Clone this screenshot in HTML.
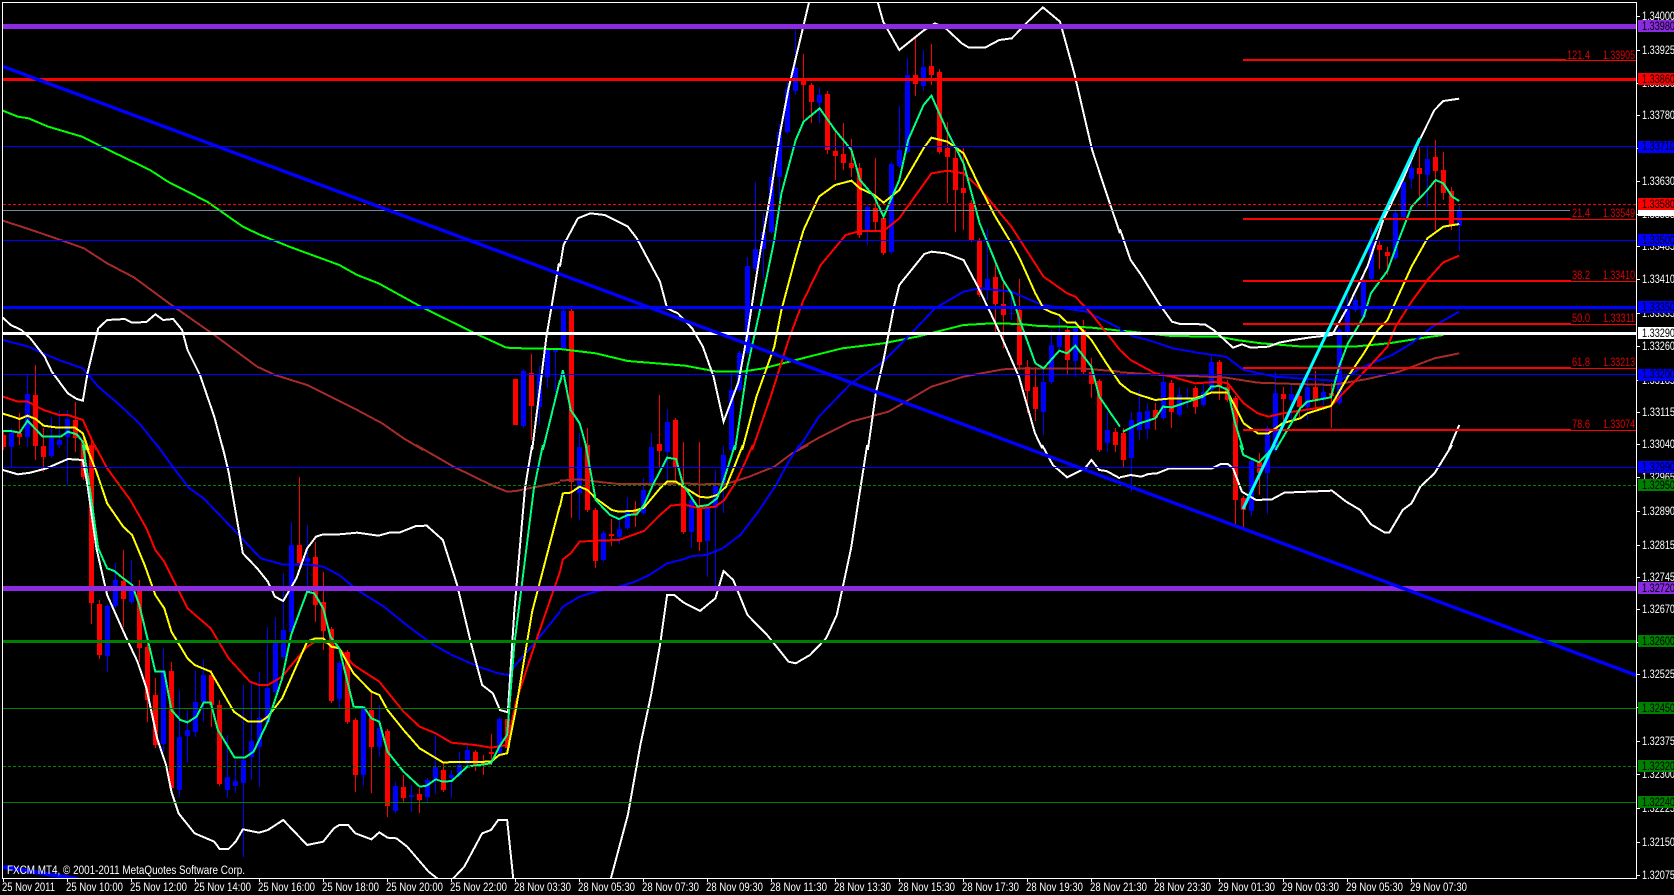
<!DOCTYPE html>
<html><head><meta charset="utf-8"><title>FXCM MT4</title>
<style>html,body{margin:0;padding:0;background:#000;width:1674px;height:895px;overflow:hidden}svg{display:block}
text{font-family:"Liberation Sans",sans-serif;font-size:11.5px}
polyline{fill:none;vector-effect:non-scaling-stroke;stroke-linejoin:miter}</style></head><body>
<svg width="1674" height="895" viewBox="0 0 1674 895" xmlns="http://www.w3.org/2000/svg">
<defs><clipPath id="c"><rect x="3" y="3" width="1633" height="875"/></clipPath></defs>
<rect width="1674" height="895" fill="#000"/>
<g clip-path="url(#c)">
<g transform="translate(.5,0)" shape-rendering="crispEdges" fill="none">
<path stroke="#f00" stroke-width="1" d="M3 430V450M19 413V445M35 365V460M43 428V472M75 402V452M83 437V480M91 440V624M99 600V659M123 550V627M139 580V662M147 640V722M155 678V748M171 662V790M211 670V727M219 700V786M299 477V570M315 542V622M323 572V650M331 627V703M347 650V724M355 718V792M371 692V793M387 729V817M403 775V803M419 788V813M443 763V792M475 750V771M483 755V775M491 734V765M507 719V750M515 379V425M531 354V440M571 309V518M587 428V512M595 508V568M611 519V546M635 501V527M659 395V467M675 418V480M683 442V534M699 442V551M803 54V120M811 83V123M827 91V154M835 132V180M843 123V170M851 139V177M859 163V238M875 158V230M883 216V255M915 36V96M931 44V85M939 69V154M947 122V203M955 148V232M963 148V230M971 200V242M979 238V297M995 264V333M1003 281V348M1019 279V370M1027 360V413M1035 367V421M1067 328V375M1083 320V374M1091 358V398M1099 379V452M1115 428V452M1123 428V468M1155 403V430M1171 380V428M1195 386V414M1219 360V400M1227 380V402M1235 396V524M1243 496V527M1259 453V495M1283 387V427M1299 383V417M1315 371V408M1331 383V428M1379 240V269M1387 247V275M1419 147V200M1435 140V230M1443 152V200M1451 187V230"/>
<path stroke="#00f" stroke-width="1" d="M11 428V467M27 375V447M51 417V458M59 410V448M67 410V485M107 604V672M115 563V608M131 560V604M163 648V752M179 690V797M187 710V763M195 670V737M203 659V722M227 735V798M235 760V793M243 685V857M251 683V780M259 672V787M267 627V724M275 617V694M283 573V659M291 522V634M307 525V592M339 661V708M363 706V786M379 705V757M395 782V813M411 785V812M427 778V802M435 735V794M451 770V798M459 752V777M467 745V766M499 717V755M523 369V428M539 366V425M547 348V388M555 350V392M563 309V350M579 433V520M603 531V562M619 519V544M627 497V530M643 478V515M651 433V485M667 409V482M691 498V548M707 506V577M715 470V590M723 446V513M731 373V452M739 351V392M747 257V355M755 182V271M763 213V278M771 162V234M779 124V200M787 82V134M795 30V95M819 87V123M867 205V245M891 162V254M899 106V168M907 58V154M923 50V91M987 229V300M1011 293V320M1043 368V435M1051 330V384M1059 317V349M1075 320V377M1107 412V452M1131 412V492M1139 390V440M1147 403V439M1163 372V420M1179 387V417M1187 388V408M1203 383V407M1211 355V392M1251 459V516M1267 426V514M1275 372V452M1291 383V425M1307 373V420M1323 382V405M1339 328V405M1347 295V338M1355 295V312M1363 277V319M1371 228V281M1395 211V260M1403 177V219M1411 160V189M1427 147V207M1459 206V251"/>
<path stroke="#f00" stroke-width="5" d="M3 435V447M19 433V437M35 395V446M43 446V457M75 420V438M83 440V477M91 445V603M99 604V655M123 581V599M139 590V648M147 647V700M155 695V745M171 671V788M211 675V705M219 705V784M299 545V563M315 557V605M323 602V631M331 629V701M347 652V722M355 720V775M371 710V747M387 731V806M403 787V798M419 794V800M443 770V790M475 752V765M483 763V765M491 752V754M507 719V748M515 379V425M531 373V406M571 311V482M587 445V510M595 510V561M611 534V536M635 511V514M659 444V451M675 420V467M683 486V532M699 508V542M803 78V85M811 85V102M827 94V150M835 151V156M843 154V163M851 163V168M859 168V235M875 208V222M883 218V253M915 75V84M931 66V75M939 72V152M947 148V157M955 158V190M963 188V193M971 203V240M979 240V295M995 277V304M1003 304V315M1019 310V365M1027 367V391M1035 387V409M1067 330V360M1083 330V372M1091 372V384M1099 381V450M1115 432V445M1123 433V460M1155 410V418M1171 383V412M1195 388V407M1219 362V387M1227 387V400M1235 398V500M1243 498V510M1259 462V473M1283 394V399M1299 396V407M1315 387V399M1331 393V396M1379 245V250M1387 252V256M1419 168V174M1435 157V171M1443 170V193M1451 191V226"/>
<path stroke="#00f" stroke-width="5" d="M11 433V447M27 394V437M51 438V456M59 440V445M67 419V437M107 606V656M115 580V606M131 590V602M163 671V744M179 737V790M187 730V736M195 702V732M203 675V702M227 777V790M235 781V786M243 760V783M251 741V757M259 718V747M267 688V722M275 643V692M283 630V657M291 545V632M307 558V562M339 663V699M363 708V775M379 728V747M395 786V811M411 795V797M427 780V797M435 767V780M451 775V778M459 765V775M467 750V764M499 719V753M523 371V426M539 375V407M547 350V377M555 350V352M563 311V348M579 447V493M603 533V560M619 529V537M627 510V528M643 490V513M651 447V483M667 422V452M691 500V532M707 508V541M715 486V508M723 455V486M731 390V450M739 353V390M747 266V353M755 249V269M763 232V249M771 177V232M779 132V177M787 89V132M795 68V91M819 95V103M867 207V230M891 164V252M899 150V166M907 75V152M923 67V86M987 279V290M1011 313V314M1043 382V412M1051 345V382M1059 332V347M1075 328V361M1107 430V443M1131 420V458M1139 412V430M1147 411V429M1163 382V418M1179 395V415M1187 397V399M1203 392V405M1211 362V390M1251 461V511M1267 428V473M1275 393V450M1291 394V400M1307 387V407M1323 392V398M1339 330V403M1347 310V332M1355 300V310M1363 280V317M1371 242V279M1395 213V258M1403 182V217M1411 168V179M1427 159V175M1459 210V226"/>
</g>
<!-- Indicators: coordinates expressed in each region -->
<g stroke-width="2" shape-rendering="crispEdges">
<g transform="scale(.35714,.33333)">
<polyline stroke="#a52a2a" points="8,662 80,687 170,720 235,745 300,790 375,832 480,915 600,1005 720,1100 770,1125 860,1155 1000,1230 1070,1270 1130,1315 1185,1350"/>
<polyline stroke="#0f0" points="8,332 50,350 80,355 135,380 230,410 285,440 420,510 470,545 580,605 680,680 725,703 810,740 950,795 1000,825 1060,850 1170,915 1320,995 1418,1043 1465,1045 1568,1047"/>
<polyline stroke="#00f" points="8,1020 80,1040 120,1060 170,1082 232,1105 275,1160 330,1210 390,1270 450,1350"/>
<polyline stroke="#fff" points="8,953 30,975 60,990 85,1015 125,1070 145,1115 190,1180 215,1197 232,1202 245,1120 275,985 300,960 350,957 370,968 410,966 435,943 457,960 485,957 510,990 525,1050 560,1125 600,1250 625,1350"/>
<polyline stroke="#fff" points="1490,1350 1530,1010 1565,790"/>
<polyline stroke="#f00" points="8,1190 50,1205 77,1205 122,1230 165,1245 190,1245 232,1260 270,1350"/>
<polyline stroke="#ff0" points="8,1241 30,1248 55,1257 77,1247 100,1257 122,1277 155,1282 210,1283 232,1300 248,1350"/>
<polyline stroke="#00ff7f" points="8,1293 30,1293 55,1298 77,1262 120,1310 170,1310 190,1295 215,1303 232,1325 240,1350"/>
<polyline stroke="#00ff7f" points="1520,1350 1568,1140"/>
</g>
<g transform="translate(0,445) scale(.35714,.33333)">
<polyline stroke="#a52a2a" points="1165,0 1270,65 1385,125 1420,140 1445,138 1490,128 1568,112"/>
<polyline stroke="#00f" points="440,0 480,60 530,130 570,160 660,260 730,340 790,358 860,358 905,365 950,390 1000,435 1075,485 1150,550 1215,600 1265,630 1340,665 1395,685 1425,690 1435,670 1500,590 1568,500"/>
<polyline stroke="#fff" points="622,0 640,80 680,325 720,370 750,410 770,455 793,468 830,400 860,310 885,275 905,268 950,268 1000,263 1060,272 1090,263 1120,262 1165,243 1195,242 1240,285 1280,420 1320,600 1350,720 1380,745 1400,795 1422,802 1440,500 1470,130 1490,0"/>
<polyline stroke="#fff" points="8,75 50,88 85,83 130,70 190,42 232,45 245,120 270,310 300,450 350,570 385,650 410,730 440,880 465,960 480,1040 500,1105 545,1165 600,1190 615,1212 640,1212 660,1190 680,1153 725,1163 750,1155 793,1125 860,1200 905,1190 935,1150 950,1140 975,1140 995,1165 1040,1183 1062,1162 1085,1178 1110,1180 1140,1205 1200,1280 1230,1305 1265,1305 1300,1265 1350,1165 1375,1155 1395,1125 1420,1125 1438,1310"/>
<polyline stroke="#f00" points="265,0 300,70 365,165 410,250 435,315 460,350 525,490 590,550 640,640 700,710 725,720 750,720 790,695 820,655 860,605 883,590 905,590 950,610 990,660 1062,710 1130,800 1175,845 1220,865 1264,893 1330,900 1375,908 1420,900 1445,770 1500,590 1568,380"/>
<polyline stroke="#ff0" points="240,0 270,80 300,175 345,245 370,270 405,360 435,450 460,490 480,560 525,640 545,660 590,680 655,800 695,830 730,830 750,815 790,760 860,590 883,580 905,580 928,605 950,610 990,685 1040,740 1062,750 1085,795 1130,855 1175,910 1240,952 1375,950 1398,930 1420,925 1445,790 1490,500 1568,180"/>
<polyline stroke="#00ff7f" points="232,0 250,120 275,310 300,370 320,378 345,400 370,420 390,480 415,590 435,680 460,680 480,795 505,825 525,832 550,815 570,773 590,773 610,855 657,938 685,938 710,920 750,830 790,700 815,570 860,440 880,445 905,490 925,575 950,610 990,785 1020,787 1040,820 1062,830 1085,920 1130,980 1175,1025 1195,1022 1220,1003 1240,1010 1265,1008 1308,965 1375,955 1398,905 1420,870 1440,600 1495,130 1520,0"/>
</g>
<g transform="translate(560,0) scale(.35714,.33333)">
<polyline stroke="#a52a2a" points="665,1350 730,1310 815,1265 920,1235 1040,1160 1130,1130 1240,1108 1310,1105 1460,1105 1568,1115"/>
<polyline stroke="#0f0" points="0,1047 100,1060 190,1083 350,1097 440,1115 510,1115 570,1105 660,1080 790,1045 905,1030 1000,1010 1130,975 1210,970 1290,972 1340,978 1480,982 1568,992"/>
<polyline stroke="#00f" points="665,1350 725,1250 815,1150 905,1085 975,1010 1050,925 1130,875 1175,865 1264,875 1350,915 1475,935 1568,985"/>
<polyline stroke="#fff" points="0,800 10,735 50,655 85,640 125,645 190,680 215,715 280,845 300,925 330,940 370,985 400,1040 430,1130 458,1265 500,1145 525,1000 560,760 590,580 616,400 640,265 680,85 697,8"/>
<polyline stroke="#fff" points="890,8 905,65 950,150 1020,90 1050,70 1080,85 1125,130 1145,143 1190,143 1230,120 1265,115 1310,65 1352,22 1400,65 1440,220 1490,450 1530,580 1568,700"/>
<polyline stroke="#fff" points="862,1350 885,1175 905,1085 935,920 950,855 1020,762 1040,755 1080,760 1130,780 1170,860 1215,960 1240,1020 1285,1130 1330,1300 1350,1345"/>
<polyline stroke="#f00" points="538,1350 590,1190 640,1020 680,905 730,795 800,705 840,693 906,693 950,655 1040,520 1085,512 1130,520 1175,565 1264,680 1354,830 1420,880 1443,890 1487,940 1568,1050"/>
<polyline stroke="#ff0" points="510,1350 550,1190 600,1040 620,930 660,770 682,690 725,590 770,555 816,542 840,565 880,585 906,608 950,570 1018,445 1040,413 1085,425 1130,460 1175,560 1219,650 1264,730 1287,775 1331,880 1354,925 1376,937 1398,945 1420,968 1443,968 1488,1020 1530,1090 1568,1150"/>
<polyline stroke="#00ff7f" points="0,1150 8,1110 30,1230 55,1270 75,1345"/>
<polyline stroke="#00ff7f" points="490,1350 525,1100 560,930 600,720 620,580 660,420 682,365 727,325 770,390 816,450 840,540 880,590 906,650 950,540 975,420 1018,315 1040,287 1085,395 1130,490 1175,670 1240,840 1264,880 1287,960 1331,1090 1354,1105 1398,1052 1420,1060 1443,1037 1488,1100 1510,1190 1568,1280"/>
</g>
<g transform="translate(560,445) scale(.35714,.33333)">
<polyline stroke="#a52a2a" points="0,107 55,103 120,112 165,117 300,117 345,115 390,118 465,117 530,95 600,65 650,25 695,0"/>
<polyline stroke="#00f" points="0,497 8,485 55,455 100,440 165,425 210,410 250,390 300,355 345,343 370,333 410,330 455,310 505,270 555,200 605,120 640,50 670,0"/>
<polyline stroke="#fff" points="140,1310 190,1110 225,900 255,750 280,600 300,450 320,450 345,472 392,498 435,460 458,378 485,405 525,510 580,570 640,650 660,655 700,630 745,580 775,510 815,310 860,0"/>
<polyline stroke="#fff" points="1350,0 1380,60 1420,97 1470,70 1488,45 1510,75 1530,78 1568,100"/>
<polyline stroke="#f00" points="0,380 8,343 30,325 55,290 100,287 165,285 190,275 235,258 280,210 310,182 345,178 390,190 435,185 460,165 490,115 515,60 540,0"/>
<polyline stroke="#ff0" points="0,185 8,145 30,143 55,125 77,135 100,160 145,195 165,200 210,197 235,188 280,130 300,110 325,110 345,125 390,155 415,158 440,150 465,125 490,60 512,0"/>
<polyline stroke="#00ff7f" points="72,0 100,165 140,210 165,222 190,210 215,208 235,180 260,120 300,38 325,42 345,120 385,185 415,180 440,160 460,100 490,0"/>
</g>
<g transform="translate(1120,0) scale(.35336,.33333)">
<polyline stroke="#a52a2a" points="0,1117 120,1125 210,1128 300,1133 390,1148 500,1152 600,1155 700,1137 790,1115 890,1075 960,1060"/>
<polyline stroke="#0f0" points="0,992 40,996 145,1008 280,1010 330,1020 400,1030 520,1040 660,1040 760,1030 880,1010 915,1005"/>
<polyline stroke="#00f" points="0,990 40,1010 80,1020 150,1045 230,1060 300,1070 350,1110 440,1130 530,1137 620,1143 690,1100 770,1065 825,1030 885,980 960,935"/>
<polyline stroke="#fff" points="0,688 30,780 60,825 110,910 147,965 170,972 240,973 265,990 320,1043 345,1033 370,1043 420,1040 450,1028 490,1020 540,1012 600,1005 640,930 700,800 745,660 800,540 850,415 890,330 915,303 960,296"/>
<polyline stroke="#fff" points="930,1350 960,1275"/>
<polyline stroke="#f00" points="0,1050 30,1080 100,1120 146,1130 213,1150 280,1145 305,1150 350,1210 390,1240 420,1250 460,1240 597,1218 645,1165 705,1100 757,1040 780,980 825,905 870,840 915,787 960,767"/>
<polyline stroke="#ff0" points="0,1150 30,1175 55,1185 100,1200 146,1195 213,1195 258,1178 305,1178 326,1220 350,1270 390,1300 420,1300 460,1270 510,1255 530,1240 597,1218 645,1130 690,1060 730,990 757,960 780,905 825,800 870,715 915,680 960,672"/>
<polyline stroke="#00ff7f" points="8,1295 55,1270 100,1255 122,1220 146,1222 235,1190 258,1160 281,1158 305,1170 326,1270 349,1350"/>
<polyline stroke="#00ff7f" points="440,1350 510,1225 530,1205 597,1192 620,1100 645,1030 690,950 710,880 757,812 785,730 825,620 870,570 893,540 915,550 940,590 960,603"/>
</g>
<g transform="translate(1120,445) scale(.35336,.33333)">
<polyline stroke="#fff" points="0,97 30,90 60,95 80,87 105,85 140,70 260,70 285,57 305,57 320,70 345,140 385,165 430,163 465,143 600,137 640,170 680,195 710,238 750,263 762,263 800,195 825,175 850,125 890,85 925,25 940,0"/>
<polyline stroke="#00ff7f" points="340,0 349,30 394,52 440,0"/>
</g>
</g>
<!-- horizontal levels -->
<g shape-rendering="crispEdges">
<rect x="3" y="24" width="1634" height="5" fill="#8a2be2"/>
<rect x="3" y="78" width="1634" height="3" fill="#f00"/>
<rect x="3" y="146" width="1634" height="1" fill="#00f"/>
<line x1="3" x2="1637" y1="204.5" y2="204.5" stroke="#f00" stroke-dasharray="3 2"/>
<rect x="3" y="210" width="1567" height="1" fill="#778899"/>
<rect x="3" y="240" width="1634" height="1" fill="#00f"/>
<rect x="3" y="306" width="1634" height="3" fill="#00f"/>
<rect x="3" y="332" width="1634" height="3" fill="#fff"/>
<rect x="3" y="374" width="1634" height="1" fill="#00f"/>
<rect x="3" y="467" width="1634" height="1" fill="#00f"/>
<line x1="3" x2="1637" y1="485.5" y2="485.5" stroke="#008000" stroke-dasharray="3 2"/>
<rect x="3" y="586" width="1634" height="5" fill="#8a2be2"/>
<rect x="3" y="640" width="1634" height="3" fill="#008000"/>
<rect x="3" y="708" width="1634" height="1" fill="#008000"/>
<line x1="3" x2="1637" y1="766.5" y2="766.5" stroke="#008000" stroke-dasharray="3 2"/>
<rect x="3" y="802" width="1634" height="1" fill="#008000"/>
<!-- fibonacci -->
<g fill="#f00">
<rect x="1243" y="59" width="323" height="2"/><rect x="1566" y="60" width="70" height="1"/>
<rect x="1243" y="218" width="328" height="2"/><rect x="1571" y="219" width="65" height="1"/>
<rect x="1243" y="280" width="328" height="2"/><rect x="1571" y="281" width="65" height="1"/>
<rect x="1243" y="323" width="328" height="2"/><rect x="1571" y="324" width="65" height="1"/>
<rect x="1243" y="367" width="328" height="2"/><rect x="1571" y="368" width="65" height="1"/>
<rect x="1243" y="429" width="328" height="2"/><rect x="1571" y="430" width="65" height="1"/>
</g>
</g>
<!-- trend lines -->
<line x1="3" y1="66.5" x2="1637" y2="675.5" stroke="#00f" stroke-width="3.4"/>
<line x1="3" y1="867" x2="78" y2="879" stroke="#00f" stroke-width="4"/>
<line x1="1243" y1="509" x2="1420" y2="138" stroke="#00ffff" stroke-width="3"/>
</g>
<!-- fib labels -->
<g fill="#e00000">
<text x="1567" y="59" textLength="23" lengthAdjust="spacingAndGlyphs">121.4</text><text x="1603" y="59" textLength="32" lengthAdjust="spacingAndGlyphs">1.33905</text>
<text x="1572" y="217" textLength="18" lengthAdjust="spacingAndGlyphs">21.4</text><text x="1603" y="217" textLength="32" lengthAdjust="spacingAndGlyphs">1.33549</text>
<text x="1572" y="279" textLength="18" lengthAdjust="spacingAndGlyphs">38.2</text><text x="1603" y="279" textLength="32" lengthAdjust="spacingAndGlyphs">1.33410</text>
<text x="1572" y="322" textLength="18" lengthAdjust="spacingAndGlyphs">50.0</text><text x="1603" y="322" textLength="32" lengthAdjust="spacingAndGlyphs">1.33311</text>
<text x="1572" y="366" textLength="18" lengthAdjust="spacingAndGlyphs">61.8</text><text x="1603" y="366" textLength="32" lengthAdjust="spacingAndGlyphs">1.33213</text>
<text x="1572" y="428" textLength="18" lengthAdjust="spacingAndGlyphs">78.6</text><text x="1603" y="428" textLength="32" lengthAdjust="spacingAndGlyphs">1.33074</text>
</g>
<!-- frame -->
<g shape-rendering="crispEdges" fill="#fff">
<rect x="2" y="2" width="1635" height="1"/>
<rect x="2" y="2" width="1" height="877"/>
<rect x="1636" y="2" width="1" height="877"/>
<rect x="2" y="878" width="1635" height="1"/>
<path d="M3 879h1v3h-1zM67 879h1v3h-1zM131 879h1v3h-1zM195 879h1v3h-1zM259 879h1v3h-1zM323 879h1v3h-1zM387 879h1v3h-1zM451 879h1v3h-1zM515 879h1v3h-1zM579 879h1v3h-1zM643 879h1v3h-1zM707 879h1v3h-1zM771 879h1v3h-1zM835 879h1v3h-1zM899 879h1v3h-1zM963 879h1v3h-1zM1027 879h1v3h-1zM1091 879h1v3h-1zM1155 879h1v3h-1zM1219 879h1v3h-1zM1283 879h1v3h-1zM1347 879h1v3h-1zM1411 879h1v3h-1z"/>
<path d="M1637 16h3v1h-3zM1637 50h3v1h-3zM1637 83h3v1h-3zM1637 115h3v1h-3zM1637 148h3v1h-3zM1637 181h3v1h-3zM1637 214h3v1h-3zM1637 246h3v1h-3zM1637 279h3v1h-3zM1637 313h3v1h-3zM1637 346h3v1h-3zM1637 380h3v1h-3zM1637 412h3v1h-3zM1637 444h3v1h-3zM1637 477h3v1h-3zM1637 511h3v1h-3zM1637 545h3v1h-3zM1637 577h3v1h-3zM1637 609h3v1h-3zM1637 642h3v1h-3zM1637 674h3v1h-3zM1637 707h3v1h-3zM1637 741h3v1h-3zM1637 774h3v1h-3zM1637 808h3v1h-3zM1637 842h3v1h-3zM1637 875h3v1h-3z"/>
</g>
<!-- price scale -->
<g fill="#fff">
<text x="1642" y="20" textLength="33" lengthAdjust="spacingAndGlyphs">1.34000</text>
<text x="1642" y="54" textLength="33" lengthAdjust="spacingAndGlyphs">1.33925</text>
<text x="1642" y="87" textLength="33" lengthAdjust="spacingAndGlyphs">1.33850</text>
<text x="1642" y="119" textLength="33" lengthAdjust="spacingAndGlyphs">1.33780</text>
<text x="1642" y="152" textLength="33" lengthAdjust="spacingAndGlyphs">1.33705</text>
<text x="1642" y="185" textLength="33" lengthAdjust="spacingAndGlyphs">1.33630</text>
<text x="1642" y="218" textLength="33" lengthAdjust="spacingAndGlyphs">1.33555</text>
<text x="1642" y="250" textLength="33" lengthAdjust="spacingAndGlyphs">1.33485</text>
<text x="1642" y="283" textLength="33" lengthAdjust="spacingAndGlyphs">1.33410</text>
<text x="1642" y="317" textLength="33" lengthAdjust="spacingAndGlyphs">1.33335</text>
<text x="1642" y="350" textLength="33" lengthAdjust="spacingAndGlyphs">1.33260</text>
<text x="1642" y="384" textLength="33" lengthAdjust="spacingAndGlyphs">1.33185</text>
<text x="1642" y="416" textLength="33" lengthAdjust="spacingAndGlyphs">1.33115</text>
<text x="1642" y="448" textLength="33" lengthAdjust="spacingAndGlyphs">1.33040</text>
<text x="1642" y="481" textLength="33" lengthAdjust="spacingAndGlyphs">1.32965</text>
<text x="1642" y="515" textLength="33" lengthAdjust="spacingAndGlyphs">1.32890</text>
<text x="1642" y="549" textLength="33" lengthAdjust="spacingAndGlyphs">1.32815</text>
<text x="1642" y="581" textLength="33" lengthAdjust="spacingAndGlyphs">1.32745</text>
<text x="1642" y="613" textLength="33" lengthAdjust="spacingAndGlyphs">1.32670</text>
<text x="1642" y="678" textLength="33" lengthAdjust="spacingAndGlyphs">1.32525</text>
<text x="1642" y="745" textLength="33" lengthAdjust="spacingAndGlyphs">1.32375</text>
<text x="1642" y="778" textLength="33" lengthAdjust="spacingAndGlyphs">1.32300</text>
<text x="1642" y="812" textLength="33" lengthAdjust="spacingAndGlyphs">1.32225</text>
<text x="1642" y="846" textLength="33" lengthAdjust="spacingAndGlyphs">1.32150</text>
<text x="1642" y="879" textLength="33" lengthAdjust="spacingAndGlyphs">1.32075</text>
</g>
<!-- price tags -->
<g shape-rendering="crispEdges">
<rect x="1638" y="20" width="36" height="12" fill="#8a2be2"/>
<rect x="1638" y="73" width="36" height="12" fill="#f00"/>
<rect x="1638" y="141" width="36" height="12" fill="#00f"/>
<rect x="1638" y="205" width="36" height="11" fill="#fff"/>
<rect x="1638" y="198" width="36" height="12" fill="#f00"/>
<rect x="1638" y="234" width="36" height="12" fill="#00f"/>
<rect x="1638" y="301" width="36" height="12" fill="#00f"/>
<rect x="1638" y="327" width="36" height="12" fill="#fff"/>
<rect x="1638" y="369" width="36" height="12" fill="#00f"/>
<rect x="1638" y="461" width="36" height="12" fill="#00f"/>
<rect x="1638" y="479" width="36" height="12" fill="#008000"/>
<rect x="1638" y="582" width="36" height="12" fill="#8a2be2"/>
<rect x="1638" y="635" width="36" height="12" fill="#008000"/>
<rect x="1638" y="702" width="36" height="12" fill="#008000"/>
<rect x="1638" y="760" width="36" height="12" fill="#008000"/>
<rect x="1638" y="796" width="36" height="12" fill="#008000"/>
</g>
<g fill="#000">
<text x="1642" y="30" textLength="33" lengthAdjust="spacingAndGlyphs">1.33980</text>
<text x="1642" y="83" textLength="33" lengthAdjust="spacingAndGlyphs">1.33860</text>
<text x="1642" y="150" textLength="33" lengthAdjust="spacingAndGlyphs">1.33710</text>
<text x="1642" y="208" textLength="33" lengthAdjust="spacingAndGlyphs">1.33580</text>
<text x="1642" y="244" textLength="33" lengthAdjust="spacingAndGlyphs">1.33500</text>
<text x="1642" y="311" textLength="33" lengthAdjust="spacingAndGlyphs">1.33350</text>
<text x="1642" y="337" textLength="33" lengthAdjust="spacingAndGlyphs">1.33290</text>
<text x="1642" y="378" textLength="33" lengthAdjust="spacingAndGlyphs">1.33200</text>
<text x="1642" y="471" textLength="33" lengthAdjust="spacingAndGlyphs">1.32990</text>
<text x="1642" y="489" textLength="33" lengthAdjust="spacingAndGlyphs">1.32950</text>
<text x="1642" y="592" textLength="33" lengthAdjust="spacingAndGlyphs">1.32720</text>
<text x="1642" y="645" textLength="33" lengthAdjust="spacingAndGlyphs">1.32600</text>
<text x="1642" y="712" textLength="33" lengthAdjust="spacingAndGlyphs">1.32450</text>
<text x="1642" y="770" textLength="33" lengthAdjust="spacingAndGlyphs">1.32320</text>
<text x="1642" y="806" textLength="33" lengthAdjust="spacingAndGlyphs">1.32240</text>
</g>
<!-- time scale -->
<g fill="#fff">
<text x="2" y="891" textLength="53" lengthAdjust="spacingAndGlyphs">25 Nov 2011</text>
<text x="66" y="891" textLength="57" lengthAdjust="spacingAndGlyphs">25 Nov 10:00</text>
<text x="130" y="891" textLength="57" lengthAdjust="spacingAndGlyphs">25 Nov 12:00</text>
<text x="194" y="891" textLength="57" lengthAdjust="spacingAndGlyphs">25 Nov 14:00</text>
<text x="258" y="891" textLength="57" lengthAdjust="spacingAndGlyphs">25 Nov 16:00</text>
<text x="322" y="891" textLength="57" lengthAdjust="spacingAndGlyphs">25 Nov 18:00</text>
<text x="386" y="891" textLength="57" lengthAdjust="spacingAndGlyphs">25 Nov 20:00</text>
<text x="450" y="891" textLength="57" lengthAdjust="spacingAndGlyphs">25 Nov 22:00</text>
<text x="514" y="891" textLength="57" lengthAdjust="spacingAndGlyphs">28 Nov 03:30</text>
<text x="578" y="891" textLength="57" lengthAdjust="spacingAndGlyphs">28 Nov 05:30</text>
<text x="642" y="891" textLength="57" lengthAdjust="spacingAndGlyphs">28 Nov 07:30</text>
<text x="706" y="891" textLength="57" lengthAdjust="spacingAndGlyphs">28 Nov 09:30</text>
<text x="770" y="891" textLength="57" lengthAdjust="spacingAndGlyphs">28 Nov 11:30</text>
<text x="834" y="891" textLength="57" lengthAdjust="spacingAndGlyphs">28 Nov 13:30</text>
<text x="898" y="891" textLength="57" lengthAdjust="spacingAndGlyphs">28 Nov 15:30</text>
<text x="962" y="891" textLength="57" lengthAdjust="spacingAndGlyphs">28 Nov 17:30</text>
<text x="1026" y="891" textLength="57" lengthAdjust="spacingAndGlyphs">28 Nov 19:30</text>
<text x="1090" y="891" textLength="57" lengthAdjust="spacingAndGlyphs">28 Nov 21:30</text>
<text x="1154" y="891" textLength="57" lengthAdjust="spacingAndGlyphs">28 Nov 23:30</text>
<text x="1218" y="891" textLength="57" lengthAdjust="spacingAndGlyphs">29 Nov 01:30</text>
<text x="1282" y="891" textLength="57" lengthAdjust="spacingAndGlyphs">29 Nov 03:30</text>
<text x="1346" y="891" textLength="57" lengthAdjust="spacingAndGlyphs">29 Nov 05:30</text>
<text x="1410" y="891" textLength="57" lengthAdjust="spacingAndGlyphs">29 Nov 07:30</text>
<text x="7" y="874" textLength="238" lengthAdjust="spacingAndGlyphs">FXCM MT4, © 2001-2011 MetaQuotes Software Corp.</text>
</g>
</svg>
</body></html>
